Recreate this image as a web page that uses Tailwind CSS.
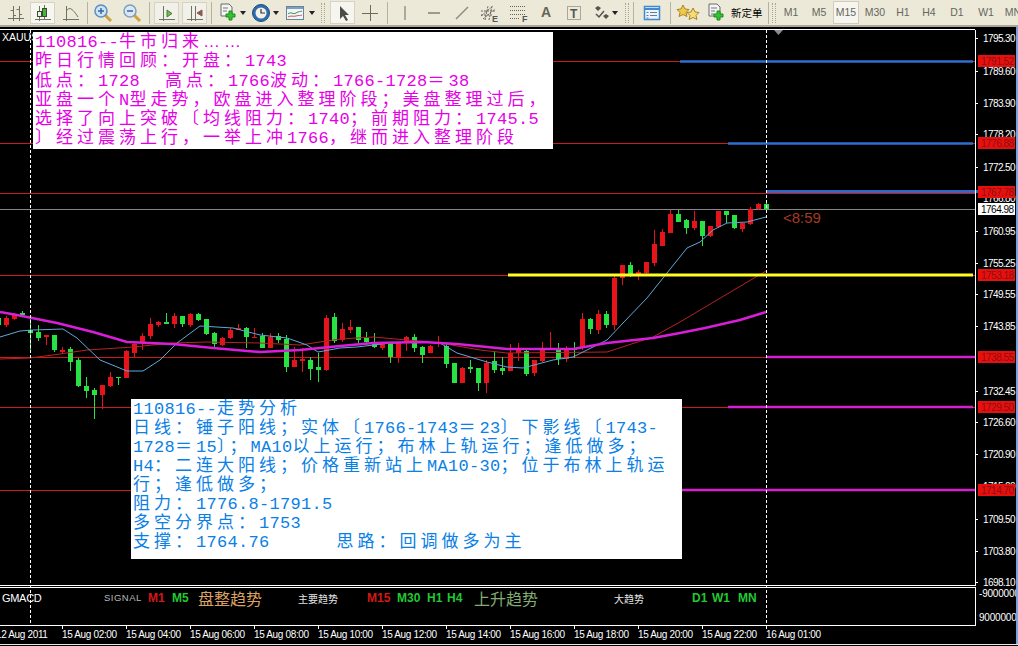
<!DOCTYPE html>
<html lang="zh-CN">
<head>
  <meta charset="UTF-8" />
  <title>XAUUSD M15</title>
  <script src="https://cdn.jsdelivr.net/npm/@tailwindcss/browser@4"></script>
</head>
<body class="w-[1018px] h-[646px] overflow-hidden bg-black font-['Liberation_Sans',sans-serif]">

  <!-- Toolbar -->
  <div class="flex items-center h-[27px] pl-[3px] bg-[#ece9d8] border-b-2 border-[#aca899] overflow-hidden">
    <div class="w-[25px] h-[22px] shrink-0 flex items-center justify-center">
      <svg width="20" height="20" fill="none" stroke="#6d7562"><path d="M2 15.500H18M7.500 3v15M4.500 7.500H7.500M7.500 12.500h2.500M13.500 3v15M10.500 6.500h3M13.500 11.500h2.500"/></svg>
    </div>
    <div class="w-[25px] h-[22px] ml-[2px] shrink-0 flex items-center justify-center bg-[#f6f5ef] border border-[#d6d3c4]">
      <svg width="20" height="20" fill="none" stroke="#6d7562"><path d="M2 16.500H18M6.500 3v15M11.500 2v15"/><rect x="9.500" y="5.500" width="4" height="8" fill="#43b53a" stroke="#3c4a30"/><rect x="4.500" y="8.500" width="4" height="5" fill="#eee" stroke="#3c4a30"/></svg>
    </div>
    <div class="w-[25px] h-[22px] ml-[3px] shrink-0 flex items-center justify-center">
      <svg width="20" height="20" fill="none" stroke="#6d7562"><path d="M2 16.500H18M5.500 3v15M5.500 8C8 3 12 6 17 14"/></svg>
    </div>
    <div class="w-px h-[22px] ml-[4px] shrink-0 bg-[#b5b2a0]"></div>
    <div class="w-[24px] h-[22px] ml-[3px] shrink-0 flex items-center justify-center">
      <svg width="20" height="20" fill="none"><path d="M12 12l6 6" stroke="#cfa23c" stroke-width="3"/><circle cx="8" cy="8" r="6" fill="#cfe3f5" stroke="#5b8fc0" stroke-width="1.500"/><path d="M5 8h6M8 5v6" stroke="#2e6aa8" stroke-width="1.500"/></svg>
    </div>
    <div class="w-[24px] h-[22px] ml-[5px] shrink-0 flex items-center justify-center">
      <svg width="20" height="20" fill="none"><path d="M12 12l6 6" stroke="#cfa23c" stroke-width="3"/><circle cx="8" cy="8" r="6" fill="#dbe8f3" stroke="#7d9fc0" stroke-width="1.500"/><path d="M5 8h6" stroke="#2e6aa8" stroke-width="1.500"/></svg>
    </div>
    <div class="w-px h-[22px] ml-[5px] shrink-0 bg-[#b5b2a0]"></div>
    <div class="w-[25px] h-[22px] ml-[4px] shrink-0 flex items-center justify-center bg-[#f2f1e9] border border-[#d6d3c4]">
      <svg width="20" height="20" fill="none" stroke="#6d7562"><path d="M2 16.500H18M6.500 3v15"/><path d="M10 7l5 3.500-5 3.500z" fill="#6fbf4a" stroke="#4d7a3a"/></svg>
    </div>
    <div class="w-[25px] h-[22px] ml-[3px] shrink-0 flex items-center justify-center bg-[#f2f1e9] border border-[#d6d3c4]">
      <svg width="20" height="20" fill="none" stroke="#6d7562"><path d="M2 16.500H18M6.500 3v15M10.500 3v15"/><path d="M17 7l-5 3 5 3z" fill="#8a5a50" stroke="#8a5a50"/></svg>
    </div>
    <div class="w-px h-[22px] ml-[4px] shrink-0 bg-[#b5b2a0]"></div>
    <div class="w-[28px] h-[22px] ml-[6px] shrink-0 flex items-center gap-[2px]">
      <svg width="20" height="20" fill="none"><path d="M3 1h8l3 3v9H3z" fill="#f4f4f4" stroke="#6a6a6a"/><path d="M5 5h5M5 8h4" stroke="#777"/><path d="M11 8h3v3h3v3h-3v3h-3v-3H8v-3h3z" fill="#35c335" stroke="#1c8a1c"/></svg>
      <svg width="6" height="4"><path d="M0 0h6L3 4z" fill="#222"/></svg>
    </div>
    <div class="w-[30px] h-[22px] ml-[5px] shrink-0 flex items-center gap-[2px]">
      <svg width="20" height="20" fill="none"><circle cx="10" cy="10" r="8.500" fill="#2f6ea8" stroke="#1c4c80"/><circle cx="10" cy="10" r="5.500" fill="#f2f2ea"/><path d="M10 6v4h4" stroke="#333" stroke-width="1.200"/></svg>
      <svg width="6" height="4"><path d="M0 0h6L3 4z" fill="#222"/></svg>
    </div>
    <div class="w-[31px] h-[22px] ml-[4px] shrink-0 flex items-center gap-[2px]">
      <svg width="22" height="20" fill="none"><rect x="1.500" y="3.500" width="17" height="13" fill="#f1f5f7" stroke="#6c8296"/><path d="M2 5h16" stroke="#7d9fc0" stroke-width="2"/><path d="M3 11c3-3 5 1 8-1s4-1 6-2" stroke="#3f8f56"/><path d="M3 14c3-2 5 0 8-1s4 0 6-1" stroke="#c05c5c"/></svg>
      <svg width="6" height="4"><path d="M0 0h6L3 4z" fill="#222"/></svg>
    </div>
    <div class="w-[4px] h-[20px] ml-[5px] shrink-0 border-x border-dotted border-[#a8a594]"></div>
    <div class="w-[25px] h-[23px] ml-[5px] shrink-0 flex items-center justify-center bg-[#f6f5ef] border border-[#d6d3c4]">
      <svg width="16" height="18"><path d="M5 2v13l3-3 3 5 2-1-3-5h4z" fill="#4c4c46"/></svg>
    </div>
    <div class="w-[24px] h-[22px] ml-[3px] shrink-0 flex items-center justify-center">
      <svg width="18" height="18" fill="none" stroke="#6a6a60"><path d="M1 9.500h16M9.500 1v16"/></svg>
    </div>
    <div class="w-px h-[22px] ml-[5px] shrink-0 bg-[#b5b2a0]"></div>
    <div class="w-[18px] h-[22px] ml-[8px] shrink-0 flex items-center justify-center">
      <svg width="4" height="16" fill="none" stroke="#6a6a5e"><path d="M2 1v14"/></svg>
    </div>
    <div class="w-[18px] h-[22px] ml-[11px] shrink-0 flex items-center justify-center">
      <svg width="14" height="4" fill="none" stroke="#4a4a42"><path d="M1 2h12"/></svg>
    </div>
    <div class="w-[18px] h-[22px] ml-[10px] shrink-0 flex items-center justify-center">
      <svg width="16" height="16" fill="none" stroke="#8a8a80" stroke-width="1.500"><path d="M2 14L14 2"/></svg>
    </div>
    <div class="w-[22px] h-[22px] ml-[8px] shrink-0 flex items-center justify-center">
      <svg width="22" height="20" fill="none" stroke="#65655a"><path d="M2 13L14 3M4 16L16 6M2 8h14M2 12h12M6 17L9 3M10 17L13 3" stroke-dasharray="2 1"/><text x="13" y="19" class="text-[9px] font-bold fill-[#555] stroke-0">E</text></svg>
    </div>
    <div class="w-[20px] h-[22px] ml-[7px] shrink-0 flex items-center justify-center">
      <svg width="22" height="20" fill="none" stroke="#65655a"><path d="M2 3.500h15M2 7.500h15M2 11.500h15M2 15.500h9" stroke-dasharray="1 1"/><text x="14" y="19" class="text-[9px] font-bold fill-[#555] stroke-0">F</text></svg>
    </div>
    <span class="w-[20px] ml-[8px] shrink-0 text-center text-[14px] font-bold text-[#65655a]">A</span>
    <div class="w-[18px] h-[22px] ml-[9px] shrink-0 flex items-center justify-center">
      <svg width="16" height="16" fill="none" stroke="#65655a"><rect x="1.500" y="1.500" width="13" height="13" stroke-dasharray="1 1"/><text x="4" y="12.500" class="text-[12px] font-bold fill-[#555] stroke-0">T</text></svg>
    </div>
    <div class="w-[26px] h-[22px] ml-[10px] shrink-0 flex items-center gap-[3px]">
      <svg width="16" height="16"><path d="M2 3l3-2 3 2-3 3zM10 11l3-2 3 2-3 3z" fill="#55554c"/><path d="M3 9l3 3 5-6" fill="none" stroke="#55554c" stroke-width="1.500"/></svg>
      <svg width="6" height="4"><path d="M0 0h6L3 4z" fill="#222"/></svg>
    </div>
    <div class="w-[4px] h-[20px] ml-[6px] shrink-0 border-x border-dotted border-[#a8a594]"></div>
    <div class="w-px h-[22px] ml-[4px] shrink-0 bg-[#b5b2a0]"></div>
    <div class="w-[20px] h-[22px] ml-[8px] shrink-0 flex items-center justify-center">
      <svg width="18" height="16" fill="none"><rect x="1.500" y="1.500" width="15" height="13" fill="#eef4fb" stroke="#3f8ad0" stroke-width="1.500"/><path d="M1 4h16" stroke="#3f8ad0" stroke-width="2"/><path d="M3.500 7.500h2M7 7.500h7M3.500 10.500h2M7 10.500h7M3.500 13h2" stroke="#6b7b90"/></svg>
    </div>
    <div class="w-px h-[22px] ml-[8px] shrink-0 bg-[#b5b2a0]"></div>
    <div class="w-[28px] h-[22px] ml-[3px] shrink-0 flex items-center justify-center">
      <svg width="26" height="20"><path d="M8 2l2 4 4 .5-3 3 1 4-4-2-4 2 1-4-3-3 4-.5z" fill="#f2c94c" stroke="#a8861e"/><path d="M18 5l2 4 4 .5-3 3 1 4-4-2-4 2 1-4-3-3 4-.5z" fill="#f7dc7a" stroke="#a8861e"/></svg>
    </div>
    <div class="w-[24px] h-[22px] ml-[2px] shrink-0 flex items-center justify-center">
      <svg width="20" height="20" fill="none"><path d="M3 1h8l3 3v9H3z" fill="#f4f4f4" stroke="#6a6a6a"/><path d="M5 5h6M5 8h4M5 11h3" stroke="#777"/><path d="M11 8h3v3h3v3h-3v3h-3v-3H8v-3h3z" fill="#35c335" stroke="#1c8a1c"/></svg>
    </div>
    <span class="w-[36px] ml-[3px] shrink-0 text-[10.500px] text-black font-['Noto_Sans_CJK_SC',sans-serif] whitespace-nowrap">新定单</span>
    <div class="w-px h-[22px] ml-[1px] shrink-0 bg-[#b5b2a0]"></div>
    <div class="w-[4px] h-[20px] ml-[3px] shrink-0 border-x border-dotted border-[#a8a594]"></div>
    <div class="flex items-center ml-[1px] text-[10.500px] text-[#66665e] shrink-0">
      <span class="w-[28px] text-center">M1</span>
      <span class="w-[28px] text-center">M5</span>
      <span class="w-[26px] h-[23px] leading-[21px] text-center bg-[#f6f5ef] border border-[#cfccbd]">M15</span>
      <span class="w-[32px] text-center">M30</span>
      <span class="w-[24px] text-center">H1</span>
      <span class="w-[28px] text-center">H4</span>
      <span class="w-[28px] text-center">D1</span>
      <span class="w-[30px] text-center">W1</span>
      <span class="w-[24px] text-center">MN</span>
    </div>
  </div>

  <div class="flex">
    <div class="relative w-[1016px] shrink-0">
      <!-- Main chart -->
      <div class="relative mt-[2px] border-y border-white w-[975px] h-[557px]">
        <svg class="absolute left-0 top-0 overflow-visible" width="1016" height="556" viewBox="0 30 1016 556">
          <g stroke="#cc1a1a" fill="none">
            <path d="M0 61.500H975M0 143.500H975M0 193.500H975M0 275.500H975M0 357.500H975M0 407.500H975M0 490.500H975"/>
          </g>
          <path d="M0 209.500H975" stroke="#868686"/>
          <g id="candles"></g>
          <polyline fill="none" stroke="#b82222" points="0,359 30,358 53,355 87,350 133,347 173,343 207,342 260,343 300,345 340,339 373,337 407,340 440,343 480,350 507,353 607,352 653,337 680,322 717,300 766,271"/>
          <polyline fill="none" stroke="#5fa8d8" points="0,337 20,331 33,330 63,329 77,338 100,360 127,371 143,371 160,360 177,343 200,326 233,328 260,335 287,338 307,345 318,352 340,348 357,347 390,343 417,342 440,343 457,353 487,362 507,367 523,368 553,360 573,357 607,340 623,323 647,298 667,273 687,248 700,242 713,230 727,223 747,222 766,217"/>
          <polyline fill="none" stroke="#d81ed8" stroke-width="2.500" points="0,312 17,315 57,323 93,332 127,342 173,344 213,348 260,352 300,350 340,346 373,343 423,342 457,344 507,349 573,349 607,343 653,338 680,333 705,328 740,320 766,312"/>
          <path d="M680 61.500H973M728 143.500H973" stroke="#2f6fd0" stroke-width="2.500"/>
          <path d="M766 191.500H978" stroke="#3268c4" stroke-width="3"/>
          <path d="M508 275H973" stroke="#ffff22" stroke-width="3"/>
          <path d="M766 357H975M728 407H973M682 490H975" stroke="#d81ed0" stroke-width="2.500"/>
          <path d="M774 30h9l-4.500 5z" fill="#8c8c8c"/>
          <text x="783" y="223" class="text-[15px] fill-[#a63a22]">&lt;8:59</text>
          <text x="2" y="41" class="text-[10.500px] fill-white">XAUUS</text>

          <!-- price axis -->
          <path d="M975.500 30V586" stroke="#fff"/>
          <g class="text-[10px] tracking-[-0.6px] fill-white">
            <text x="983" y="42">1795.30</text><text x="983" y="75">1789.60</text><text x="983" y="107">1783.90</text>
            <text x="983" y="138">1778.20</text><text x="983" y="171">1772.50</text><text x="983" y="202">1766.80</text>
            <text x="983" y="235">1760.95</text><text x="983" y="267">1755.25</text><text x="983" y="298">1749.55</text>
            <text x="983" y="330">1743.85</text><text x="983" y="395">1732.45</text>
            <text x="983" y="426">1726.60</text><text x="983" y="458">1720.90</text><text x="983" y="490">1715.20</text>
            <text x="983" y="523">1709.50</text><text x="983" y="555">1703.80</text><text x="983" y="586">1698.10</text>
          </g>
          <g stroke="#fff"><path d="M975 38.500h3M975 71.500h3M975 103.500h3M975 134.500h3M975 167.500h3M975 231.500h3M975 263.500h3M975 294.500h3M975 326.500h3M975 391.500h3M975 422.500h3M975 454.500h3M975 519.500h3M975 551.500h3M975 582.500h3"/></g>
          <g fill="#e8100f">
            <rect x="978" y="55" width="37" height="12"/><rect x="978" y="137" width="37" height="12"/><rect x="978" y="186" width="37" height="12"/>
            <rect x="978" y="269" width="37" height="12"/><rect x="978" y="351" width="37" height="12"/><rect x="978" y="401" width="37" height="12"/><rect x="978" y="484" width="37" height="12"/>
          </g>
          <rect x="978" y="203" width="37" height="12" fill="#fff"/>
          <g class="text-[10px] tracking-[-0.5px] fill-[#8c0f0f]">
            <text x="981" y="65">1791.52</text><text x="981" y="147">1776.88</text><text x="981" y="196">1767.78</text>
            <text x="981" y="279">1753.18</text><text x="981" y="361">1738.55</text><text x="981" y="411">1729.50</text><text x="981" y="494">1714.70</text>
          </g>
          <text x="981" y="213" class="text-[10px] tracking-[-0.5px] fill-black">1764.98</text>
        </svg>

        <!-- Analysis notes -->
        <div class="absolute left-[33px] top-[2px] w-[520px] h-[117px] pl-[2px] bg-white text-[#e600e6] text-[17px] leading-[19.300px] tracking-[4px] whitespace-nowrap font-['Noto_Sans_CJK_SC',sans-serif] *:h-[19.300px]">
          <div class="-mt-[2px]"><span class="font-['Liberation_Mono',monospace] tracking-[0.3px]">110816--</span>牛市归来<span class="font-['Liberation_Sans',sans-serif]">……</span></div>
          <div>昨日行情回顾&#xFF1A;开盘&#xFF1A;<span class="font-['Liberation_Mono',monospace] tracking-[0.3px]">1743</span></div>
          <div>低点&#xFF1A;<span class="font-['Liberation_Mono',monospace] tracking-[0.3px] whitespace-pre mr-[4px]">1728  </span>高点&#xFF1A;<span class="font-['Liberation_Mono',monospace] tracking-[0.3px]">1766</span>波动&#xFF1A;<span class="font-['Liberation_Mono',monospace] tracking-[0.3px]">1766-1728</span>&#xFF1D;<span class="font-['Liberation_Mono',monospace] tracking-[0.3px]">38</span></div>
          <div>亚盘一个<span class="font-['Liberation_Mono',monospace] tracking-[0.3px]">N</span>型走势&#xFF0C;欧盘进入整理阶段&#xFF1B;美盘整理过后&#xFF0C;</div>
          <div>选择了向上突破〔均线阻力&#xFF1A;<span class="font-['Liberation_Mono',monospace] tracking-[0.3px]">1740</span>&#xFF1B;前期阻力&#xFF1A;<span class="font-['Liberation_Mono',monospace] tracking-[0.3px]">1745.5</span></div>
          <div>〕经过震荡上行&#xFF0C;一举上冲<span class="font-['Liberation_Mono',monospace] tracking-[0.3px]">1766</span>&#xFF0C;继而进入整理阶段</div>
        </div>
        <div class="absolute left-[131px] top-[369px] w-[551px] h-[160px] pl-[2px] bg-white text-[#0a80e6] text-[17px] leading-[19px] tracking-[4px] whitespace-nowrap font-['Noto_Sans_CJK_SC',sans-serif] *:h-[19px]">
          <div class="-mt-[2px]"><span class="font-['Liberation_Mono',monospace] tracking-[0.3px]">110816--</span>走势分析</div>
          <div>日线&#xFF1A;锤子阳线&#xFF1B;实体〔<span class="font-['Liberation_Mono',monospace] tracking-[0.3px]">1766-1743</span>&#xFF1D;<span class="font-['Liberation_Mono',monospace] tracking-[0.3px]">23</span>〕下影线〔<span class="font-['Liberation_Mono',monospace] tracking-[0.3px]">1743-</span></div>
          <div><span class="font-['Liberation_Mono',monospace] tracking-[0.3px]">1728</span>&#xFF1D;<span class="font-['Liberation_Mono',monospace] tracking-[0.3px]">15</span>〕&#xFF1B;<span class="font-['Liberation_Mono',monospace] tracking-[0.3px]">MA10</span>以上运行&#xFF1B;布林上轨运行&#xFF1B;逢低做多&#xFF1B;</div>
          <div><span class="font-['Liberation_Mono',monospace] tracking-[0.3px]">H4</span>&#xFF1A;二连大阳线&#xFF1B;价格重新站上<span class="font-['Liberation_Mono',monospace] tracking-[0.3px]">MA10-30</span>&#xFF1B;位于布林上轨运</div>
          <div>行&#xFF1B;逢低做多&#xFF1B;</div>
          <div>阻力&#xFF1A;<span class="font-['Liberation_Mono',monospace] tracking-[0.3px]">1776.8-1791.5</span></div>
          <div>多空分界点&#xFF1A;<span class="font-['Liberation_Mono',monospace] tracking-[0.3px]">1753</span></div>
          <div>支撑&#xFF1A;<span class="font-['Liberation_Mono',monospace] tracking-[0.3px] whitespace-pre mr-[4px]">1764.76      </span>思路&#xFF1A;回调做多为主</div>
        </div>
      </div>

      <!-- Indicator window -->
      <div class="flex mt-[1px]">
        <div class="w-[976px] h-[39px] shrink-0 border-y border-r border-white overflow-hidden">
          <div class="flex items-center h-[20px] pl-[2px] whitespace-nowrap font-bold text-[12px]">
            <span class="w-[102px] shrink-0 text-[11px] font-normal tracking-[-0.3px] text-white">GMACD</span>
            <span class="w-[44px] shrink-0 text-[9.500px] font-normal tracking-[0.5px] text-[#b8b8b8]">SIGNAL</span>
            <span class="w-[24px] shrink-0 text-[#d41818]">M1</span>
            <span class="w-[26px] shrink-0 text-[#22c832]">M5</span>
            <span class="w-[100px] shrink-0 text-[16px] font-normal text-[#dba264] font-['Noto_Sans_CJK_SC',sans-serif]">盘整趋势</span>
            <span class="w-[69px] shrink-0 text-[10px] font-normal text-[#e4e4e4] font-['Noto_Sans_CJK_SC',sans-serif]">主要趋势</span>
            <span class="w-[30px] shrink-0 text-[#d41818]">M15</span>
            <span class="w-[30px] shrink-0 text-[#22c832]">M30</span>
            <span class="w-[20px] shrink-0 text-[#22c832]">H1</span>
            <span class="w-[27px] shrink-0 text-[#22c832]">H4</span>
            <span class="w-[140px] shrink-0 text-[16px] font-normal text-[#82ae72] font-['Noto_Sans_CJK_SC',sans-serif]">上升趋势</span>
            <span class="w-[78px] shrink-0 text-[10px] font-normal text-[#e4e4e4] font-['Noto_Sans_CJK_SC',sans-serif]">大趋势</span>
            <span class="w-[20px] shrink-0 text-[#22c832]">D1</span>
            <span class="w-[26px] shrink-0 text-[#22c832]">W1</span>
            <span class="shrink-0 text-[#22c832]">MN</span>
          </div>
        </div>
        <div class="w-[40px] h-[39px] pl-[3px] shrink-0 overflow-hidden text-[10px] tracking-[-0.2px] text-white whitespace-nowrap">
          <div class="mt-[1px] leading-[12px]">-9000000</div>
          <div class="mt-[12px] leading-[12px]">9000000</div>
        </div>
      </div>

      <!-- Crosshair lines, above the chart and the indicator window -->
      <svg class="absolute left-0 top-0 pointer-events-none" width="1016" height="598" viewBox="0 27 1016 598">
        <path d="M30.500 30V625M766.500 30V625" stroke="#fff" stroke-dasharray="3 2"/>
      </svg>

      <!-- Time axis -->
      <div class="flex h-[18px] overflow-hidden text-[10px] leading-[12px] tracking-[-0.35px] text-white whitespace-nowrap">
        <div class="w-[62px] shrink-0 pt-[3px]"><div class="-ml-[4px]">12 Aug 2011</div></div>
        <div class="w-[64px] shrink-0"><div class="w-px h-[3px] bg-white"></div>15 Aug 02:00</div>
        <div class="w-[64px] shrink-0"><div class="w-px h-[3px] bg-white"></div>15 Aug 04:00</div>
        <div class="w-[64px] shrink-0"><div class="w-px h-[3px] bg-white"></div>15 Aug 06:00</div>
        <div class="w-[64px] shrink-0"><div class="w-px h-[3px] bg-white"></div>15 Aug 08:00</div>
        <div class="w-[64px] shrink-0"><div class="w-px h-[3px] bg-white"></div>15 Aug 10:00</div>
        <div class="w-[64px] shrink-0"><div class="w-px h-[3px] bg-white"></div>15 Aug 12:00</div>
        <div class="w-[64px] shrink-0"><div class="w-px h-[3px] bg-white"></div>15 Aug 14:00</div>
        <div class="w-[64px] shrink-0"><div class="w-px h-[3px] bg-white"></div>15 Aug 16:00</div>
        <div class="w-[64px] shrink-0"><div class="w-px h-[3px] bg-white"></div>15 Aug 18:00</div>
        <div class="w-[64px] shrink-0"><div class="w-px h-[3px] bg-white"></div>15 Aug 20:00</div>
        <div class="w-[64px] shrink-0"><div class="w-px h-[3px] bg-white"></div>15 Aug 22:00</div>
        <div class="w-[64px] shrink-0"><div class="w-px h-[3px] bg-white"></div>16 Aug 01:00</div>
      </div>
    </div>
    <div class="w-[2px] shrink-0 bg-[#7ba2e0]"></div>
  </div>
  <div class="h-px bg-[#e8e8e8]"></div>

  <script>
    // x, high, body top, body bottom, low, r/g
    const bars = [
      [-2,315,318,325,328,'g'],[6,316,318,325,327,'r'],[14,313,314,319,320,'r'],[22,311,313,315,316,'g'],
      [30,317,330,333,350,'g'],[38,325,332,338,341,'g'],[46,335,335,337,345,'r'],[54,335,335,350,352,'g'],
      [62,347,350,352,353,'r'],[70,347,349,362,371,'g'],[78,358,360,386,387,'g'],[86,377,386,391,398,'g'],
      [94,388,390,395,419,'g'],[102,385,385,395,409,'r'],[110,372,377,386,387,'r'],[118,377,377,378,385,'g'],
      [126,350,351,378,378,'r'],[134,342,344,353,357,'r'],[142,333,336,343,350,'r'],[150,318,324,336,339,'r'],
      [158,321,322,325,327,'r'],[166,313,322,324,324,'g'],[174,313,316,324,328,'r'],[182,316,316,324,327,'g'],
      [190,313,314,325,327,'r'],[198,313,314,320,321,'g'],[206,319,319,334,335,'g'],[214,332,333,344,347,'g'],
      [222,337,338,345,346,'r'],[230,328,330,338,339,'r'],[238,324,328,330,330,'r'],[246,327,328,337,348,'g'],
      [254,328,337,338,338,'r'],[262,333,336,348,348,'g'],[270,333,337,348,348,'r'],[278,333,336,340,343,'g'],
      [286,335,339,367,372,'g'],[294,347,360,367,367,'r'],[302,348,359,361,372,'r'],[310,357,360,369,380,'g'],
      [318,353,367,370,382,'g'],[326,315,318,370,371,'r'],[334,313,317,341,343,'g'],[342,323,329,340,342,'r'],
      [350,320,327,330,333,'r'],[358,327,327,340,343,'g'],[366,332,338,342,345,'g'],[374,333,342,347,348,'g'],
      [382,342,343,348,350,'r'],[390,342,343,357,363,'g'],[398,342,343,358,363,'r'],[406,336,337,343,351,'r'],
      [414,334,337,348,352,'g'],[422,346,347,355,363,'g'],[430,345,346,353,353,'r'],[438,336,343,344,347,'r'],
      [446,343,346,364,368,'g'],[454,363,363,383,383,'g'],[462,367,368,383,383,'r'],[470,360,367,369,373,'g'],
      [478,368,368,383,391,'g'],[486,360,363,383,393,'r'],[494,351,361,370,373,'g'],[502,357,368,371,375,'g'],
      [510,344,353,371,371,'r'],[518,343,350,353,361,'r'],[526,348,351,374,376,'g'],[534,360,360,373,376,'r'],
      [542,342,349,361,362,'r'],[550,332,348,350,350,'r'],[558,343,348,359,365,'g'],[566,346,349,359,362,'r'],
      [574,342,348,350,358,'g'],[582,313,319,348,350,'r'],[590,318,319,329,334,'g'],[598,310,314,330,334,'r'],
      [606,311,314,325,328,'g'],[614,276,278,325,330,'r'],[622,265,265,278,285,'r'],[630,262,265,275,277,'g'],
      [638,270,272,275,280,'r'],[646,262,262,273,274,'r'],[654,230,244,263,266,'r'],[662,229,232,246,246,'r'],
      [670,210,214,233,233,'r'],[678,210,214,222,222,'g'],[686,219,220,228,234,'g'],[694,211,221,228,230,'r'],
      [702,221,221,236,246,'g'],[710,226,226,236,237,'r'],[718,211,211,227,228,'r'],[726,211,211,215,223,'g'],
      [734,215,215,228,229,'g'],[742,223,223,229,232,'r'],[750,207,209,224,225,'r'],[758,203,204,209,210,'r'],
      [766,203,204,209,210,'g']
    ];
    document.getElementById('candles').innerHTML = bars.map(([x, hi, top, bot, lo, c]) => {
      const col = c === 'r' ? '#e4141a' : '#28e244';
      return `<path d="M${x + .5} ${hi}V${lo}" stroke="${col}"/><rect x="${x - 2}" y="${top}" width="5" height="${Math.max(bot - top, 1)}" fill="${col}"/>`;
    }).join('');
  </script>
</body>
</html>
